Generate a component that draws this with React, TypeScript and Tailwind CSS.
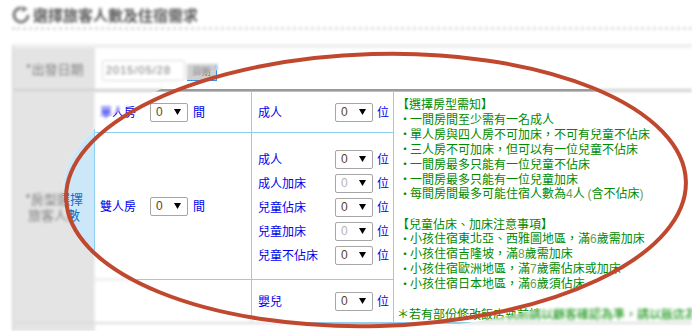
import React from "react";

const CJK = "font-['Noto_Sans_CJK_TC','Noto_Sans_CJK_SC',sans-serif]";

function Arrow() {
  return (
    <svg width="7" height="6" viewBox="0 0 7 6" className="block">
      <polygon points="0,0 7,0 3.5,6" fill="#000" />
    </svg>
  );
}

function Sel({ dim }: { dim?: boolean }) {
  return (
    <span className="inline-flex items-center justify-between w-[38px] h-[19px] border border-[#a6a6a6] rounded-[2px] bg-white pl-[5px] pr-[6px] shrink-0">
      <span
        className={`font-['Liberation_Sans',sans-serif] text-[12px] leading-none ${
          dim ? "text-[#b4b4b4]" : "text-[#5a4222]"
        }`}
      >
        0
      </span>
      <Arrow />
    </span>
  );
}

function PRow({ label, dim }: { label: string; dim?: boolean }) {
  return (
    <div className="flex items-center h-[19px]">
      <span className="w-[77px] text-[#0000ee] text-[12px] leading-none">{label}</span>
      <Sel dim={dim} />
      <span className="ml-[4px] text-[#0000ee] text-[12px] leading-none">位</span>
    </div>
  );
}

function RoomRow({ label }: { label: string }) {
  return (
    <div className="flex items-center h-[19px]">
      <span className="w-[50px] text-[#0000ee] text-[12px] leading-none">{label}</span>
      <Sel />
      <span className="ml-[5px] text-[#0000ee] text-[12px] leading-none">間</span>
    </div>
  );
}

function Num({ children }: { children: React.ReactNode }) {
  return (
    <span className="font-['Liberation_Sans',sans-serif] text-[#6a9d5a] leading-[15px]">{children}</span>
  );
}

function Line({ children }: { children?: React.ReactNode }) {
  return <div className="h-[15px] leading-[15px] flex items-center">{children}</div>;
}

function Bullet({ children }: { children: React.ReactNode }) {
  return (
    <Line>
      <span className="w-[13px] pl-[2px]">‧</span>
      <span className="leading-[15px]">{children}</span>
    </Line>
  );
}

function TitleIcon() {
  return (
    <svg width="18" height="18" viewBox="0 0 18 18" className="block">
      <path d="M9 2 A7 7 0 1 0 16 9" fill="none" stroke="#777" strokeWidth="3" />
      <polygon points="10,0 16,3 10,6" fill="#777" />
    </svg>
  );
}

function Page({ active }: { active: boolean }) {
  const inner = active ? "border-[#8ecff0]" : "border-[#d6d6d6]";
  return (
    <div className={`w-[692px] h-[331px] bg-white ${CJK} text-[12px] overflow-hidden`}>
      {/* title */}
      <div className="h-[44px] pl-[12px]">
        <div className="flex items-center h-[27px] gap-[3px] pt-[2px]">
          <TitleIcon />
          <span className="text-[15px] font-bold text-[#5a5a5a] leading-none">選擇旅客人數及住宿需求</span>
        </div>
        <div className="border-t-[3px] border-dotted border-[#dcdcdc]" />
      </div>

      {/* table */}
      <div className="ml-[12px] w-[720px] border-t-[4px] border-[#efefef] border-l-[2px] border-l-[#dadada]">
        {/* row 1 */}
        <div className="flex h-[41px]">
          <div className="w-[81px] bg-[#e4e4e4] flex items-center justify-center text-[#808080] text-[13px]">
            *出發日期
          </div>
          <div className="flex items-center pl-[7px] pt-[3px] gap-[2px]">
            <span className="w-[83px] h-[21px] border border-[#d8d8d8] rounded-[3px] flex items-center pl-[3px] text-[11px] text-[#777] font-['Liberation_Sans',sans-serif] tracking-[1px]">
              2015/05/28
            </span>
            <span className="w-[30px] h-[17px] mt-[4px] bg-[#cfcfcf] border-r border-b border-[#3a8ee6] text-[9px] text-[#777] flex items-center justify-center">
              日期
            </span>
          </div>
        </div>
        <div className={`h-[2px] ${active ? "bg-[#9a9a9a]" : "bg-[#cfcfcf]"}`} />

        {/* row 2 */}
        <div className={`flex h-[233px] border-b-[2px] ${active ? "border-[#8ecff0]" : "border-[#dcdcdc]"}`}>
          <div
            className={`w-[81px] flex items-center justify-center text-center text-[13px] leading-[16px] border-r ${
              active
                ? "bg-[#cce8f8] text-[#1a6fc0] border-[#8ecff0]"
                : "bg-[#e4e4e4] text-[#808080] border-[#efefef]"
            }`}
          >
            <span>
              *房型選擇
              <br />
              旅客人數
            </span>
          </div>
          <div className={`flex flex-1 border-t ${inner}`}>
            <div className="w-[298px] flex flex-col">
              <div className={`flex h-[41px] border-b ${inner}`}>
                <div className={`w-[157px] border-r ${inner} flex items-center pl-[5px]`}>
                  <RoomRow label="單人房" />
                </div>
                <div className="flex-1 flex items-center pl-[6px]">
                  <PRow label="成人" />
                </div>
              </div>
              <div className={`flex h-[147px] border-b ${inner}`}>
                <div className={`w-[157px] border-r ${inner} flex items-center pl-[5px]`}>
                  <RoomRow label="雙人房" />
                </div>
                <div className="flex-1 flex flex-col justify-center gap-[5px] pl-[6px] pt-[2px]">
                  <PRow label="成人" />
                  <PRow label="成人加床" dim />
                  <PRow label="兒童佔床" />
                  <PRow label="兒童加床" dim />
                  <PRow label="兒童不佔床" />
                </div>
              </div>
              <div className="flex flex-1">
                <div className={`w-[157px] border-r ${inner}`} />
                <div className="flex-1 flex items-center pl-[6px]">
                  <PRow label="嬰兒" />
                </div>
              </div>
            </div>
            <div className={`flex-1 border-l ${inner} pl-[3px] pt-[4px] text-[#008a00] text-[12px] leading-[15px] whitespace-nowrap`}>
              <Line>【選擇房型需知】</Line>
              <Bullet>一間房間至少需有一名成人</Bullet>
              <Bullet>單人房與四人房不可加床，不可有兒童不佔床</Bullet>
              <Bullet>三人房不可加床，但可以有一位兒童不佔床</Bullet>
              <Bullet>一間房最多只能有一位兒童不佔床</Bullet>
              <Bullet>一間房最多只能有一位兒童加床</Bullet>
              <Bullet>
                每間房間最多可能住宿人數為<Num>4</Num>人 <Num>(</Num>含不佔床<Num>)</Num>
              </Bullet>
              <Line />
              <Line>【兒童佔床、加床注意事項】</Line>
              <Bullet>
                小孩住宿東北亞、西雅圖地區，滿<Num>6</Num>歲需加床
              </Bullet>
              <Bullet>
                小孩住宿吉隆坡，滿<Num>8</Num>歲需加床
              </Bullet>
              <Bullet>
                小孩住宿歐洲地區，滿<Num>7</Num>歲需佔床或加床
              </Bullet>
              <Bullet>
                小孩住宿日本地區，滿<Num>6</Num>歲須佔床
              </Bullet>
              <Line />
              <Line>＊若有部份修改飯店執前請以顧客確認為準，請以飯店為準</Line>
            </div>
          </div>
        </div>
        {/* next row */}
        <div className="flex h-[20px]">
          <div className="w-[81px] bg-[#e4e4e4]" />
        </div>
      </div>
    </div>
  );
}

export default function App() {
  return (
    <div className="relative w-[692px] h-[331px] overflow-hidden bg-white">
      <div className="blur-[1.8px]">
        <Page active={false} />
      </div>
      <div className="absolute inset-0 [clip-path:ellipse(313px_139px_at_376px_190px)]">
        <Page active />
      </div>
      <svg className="absolute inset-0 pointer-events-none" width="692" height="331" viewBox="0 0 692 331">
        <ellipse
          cx="376"
          cy="190"
          rx="310"
          ry="136"
          transform="rotate(-1.6 376 190)"
          fill="none"
          stroke="#c0482e"
          strokeWidth="4"
        />
      </svg>
    </div>
  );
}
